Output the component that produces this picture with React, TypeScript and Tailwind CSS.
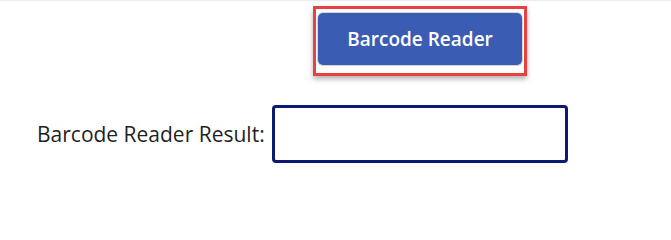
import React from "react";

export default function App() {
  return (
    <div
      className="w-[671px] h-[223px] bg-white border-t border-[#ececec] overflow-hidden"
      style={{ fontFamily: '"Open Sans", "Noto Sans", sans-serif' }}
    >
      <div className="flex pl-[313px] pt-[5px]">
        <div className="w-[214px] h-[70px] border-[3px] border-[#e8413f] bg-white shadow-[0_3px_5px_rgba(0,0,0,0.3)] pl-[2px] pr-[2px] pt-[4px]">
          <div className="h-[52px] w-[204px] rounded-[5px] bg-[#3a5cb2] shadow-[0_0_0_1px_#d4d4d4] flex items-center justify-center">
            <span className="text-white text-[19px] font-semibold leading-none">
              Barcode Reader
            </span>
          </div>
        </div>
      </div>
      <div className="flex items-center mt-[29px]">
        <div className="w-[272px] pl-[37px] text-[21px] text-[#1f1f1f] leading-none whitespace-nowrap">
          Barcode Reader Result:
        </div>
        <div className="w-[296px] h-[58px] border-[3px] border-[#0d1a6e] rounded-[4px] bg-white" />
      </div>
    </div>
  );
}
